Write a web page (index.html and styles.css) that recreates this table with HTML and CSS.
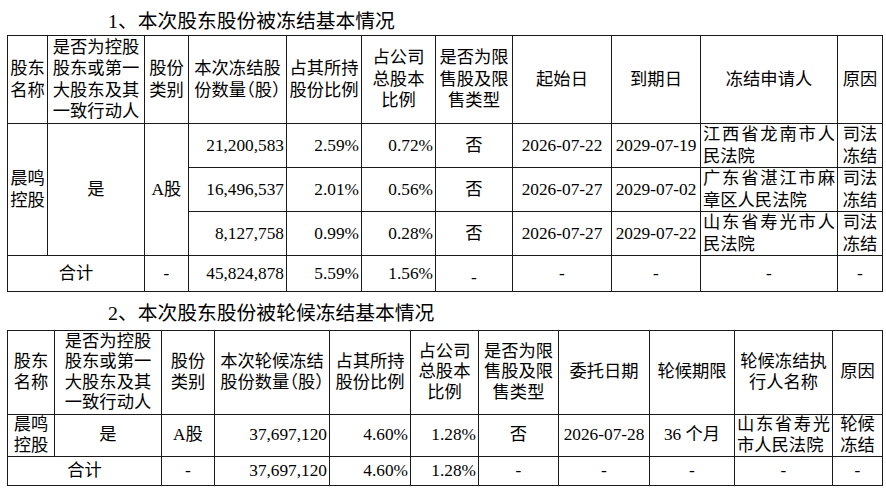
FILE: index.html
```html
<!DOCTYPE html>
<html lang="zh-CN">
<head>
<meta charset="utf-8">
<title>股份冻结情况</title>
<link rel="stylesheet" href="styles.css">
</head>
<body>
<div class="page">
  <div class="title t1">1、本次股东股份被冻结基本情况</div>
  <table class="grid g1">
    <colgroup>
      <col style="width:40px"><col style="width:97px"><col style="width:44px"><col style="width:98px"><col style="width:75px"><col style="width:74px"><col style="width:77px"><col style="width:99px"><col style="width:89px"><col style="width:137px"><col style="width:45px">
    </colgroup>
    <tr class="head">
      <th>股东<br>名称</th>
      <th>是否为控股<br>股东或第一<br>大股东及其<br>一致行动人</th>
      <th>股份<br>类别</th>
      <th class="paren">本次冻结股<br>份数量（股）</th>
      <th>占其所持<br>股份比例</th>
      <th>占公司<br>总股本<br>比例</th>
      <th>是否为限<br>售股及限<br>售类型</th>
      <th>起始日</th>
      <th>到期日</th>
      <th>冻结申请人</th>
      <th>原因</th>
    </tr>
    <tr class="row">
      <td rowspan="3" class="c">晨鸣<br>控股</td>
      <td rowspan="3" class="c">是</td>
      <td rowspan="3" class="c">A股</td>
      <td class="r">21,200,583</td>
      <td class="r">2.59%</td>
      <td class="r">0.72%</td>
      <td class="c">否</td>
      <td class="c">2026-07-22</td>
      <td class="c">2029-07-19</td>
      <td class="j">江西省龙南市人民法院</td>
      <td class="c">司法<br>冻结</td>
    </tr>
    <tr class="row">
      <td class="r">16,496,537</td>
      <td class="r">2.01%</td>
      <td class="r">0.56%</td>
      <td class="c">否</td>
      <td class="c">2026-07-27</td>
      <td class="c">2029-07-02</td>
      <td class="j">广东省湛江市麻章区人民法院</td>
      <td class="c">司法<br>冻结</td>
    </tr>
    <tr class="row">
      <td class="r">8,127,758</td>
      <td class="r">0.99%</td>
      <td class="r">0.28%</td>
      <td class="c">否</td>
      <td class="c">2026-07-27</td>
      <td class="c">2029-07-22</td>
      <td class="j">山东省寿光市人民法院</td>
      <td class="c">司法<br>冻结</td>
    </tr>
    <tr class="total">
      <td colspan="2" class="c">合计</td>
      <td class="c">-</td>
      <td class="r">45,824,878</td>
      <td class="r">5.59%</td>
      <td class="r">1.56%</td>
      <td class="c low">-</td>
      <td class="c">-</td>
      <td class="c">-</td>
      <td class="c">-</td>
      <td class="c">-</td>
    </tr>
  </table>

  <div class="title t2">2、本次股东股份被轮候冻结基本情况</div>
  <table class="grid g2">
    <colgroup>
      <col style="width:47px"><col style="width:107px"><col style="width:53px"><col style="width:115px"><col style="width:81px"><col style="width:68px"><col style="width:80px"><col style="width:91px"><col style="width:85px"><col style="width:98px"><col style="width:50px">
    </colgroup>
    <tr class="head">
      <th>股东<br>名称</th>
      <th>是否为控股<br>股东或第一<br>大股东及其<br>一致行动人</th>
      <th>股份<br>类别</th>
      <th class="paren">本次轮候冻结<br>股份数量（股）</th>
      <th>占其所持<br>股份比例</th>
      <th>占公司<br>总股本<br>比例</th>
      <th>是否为限<br>售股及限<br>售类型</th>
      <th>委托日期</th>
      <th>轮候期限</th>
      <th>轮候冻结执<br>行人名称</th>
      <th>原因</th>
    </tr>
    <tr class="row">
      <td class="c">晨鸣<br>控股</td>
      <td class="c">是</td>
      <td class="c">A股</td>
      <td class="r">37,697,120</td>
      <td class="r">4.60%</td>
      <td class="r">1.28%</td>
      <td class="c">否</td>
      <td class="c">2026-07-28</td>
      <td class="c">36 个月</td>
      <td class="j">山东省寿光市人民法院</td>
      <td class="c">轮候<br>冻结</td>
    </tr>
    <tr class="total">
      <td colspan="2" class="c">合计</td>
      <td class="c">-</td>
      <td class="r">37,697,120</td>
      <td class="r">4.60%</td>
      <td class="r">1.28%</td>
      <td class="c">-</td>
      <td class="c">-</td>
      <td class="c">-</td>
      <td class="c">-</td>
      <td class="c">-</td>
    </tr>
  </table>
</div>
</body>
</html>
```

FILE: styles.css
```css
html, body {
  margin: 0;
  padding: 0;
  background: #fff;
}

body {
  font-family: "Liberation Serif", "Noto Sans CJK SC", serif;
  color: #000;
}

.page {
  padding-left: 7px;
  width: 876px;
}

.title {
  font-size: 19.8px;
  line-height: 26px;
  padding-left: 101px;
}

.t1 {
  padding-top: 8px;
  padding-bottom: 1px;
}

.t2 {
  padding-top: 8px;
  padding-bottom: 4px;
}

.grid {
  border-collapse: collapse;
  table-layout: fixed;
  width: 875px;
  font-size: 17.3px;
}

.grid th,
.grid td {
  border: 1px solid #1a1a1a;
  padding: 0 2px;
  vertical-align: middle;
  overflow: hidden;
}

.grid th {
  font-weight: normal;
  text-align: center;
  white-space: nowrap;
}

.paren {
  font-feature-settings: "halt";
}

.g1 {
  line-height: 21.5px;
}

.g2 {
  line-height: 20.5px;
}

.g1 .head { height: 88px; }
.g1 .row { height: 44px; }
.g1 .total { height: 36px; }

.g2 .head { height: 84px; }
.g2 .row { height: 42px; }
.g2 .total { height: 29px; }

.c { text-align: center; }
.r {
  text-align: right;
  padding-right: 3px;
}
.j {
  text-align: justify;
  text-justify: inter-character;
  padding-left: 3px;
}

.low {
  padding-top: 8px !important;
}
```
